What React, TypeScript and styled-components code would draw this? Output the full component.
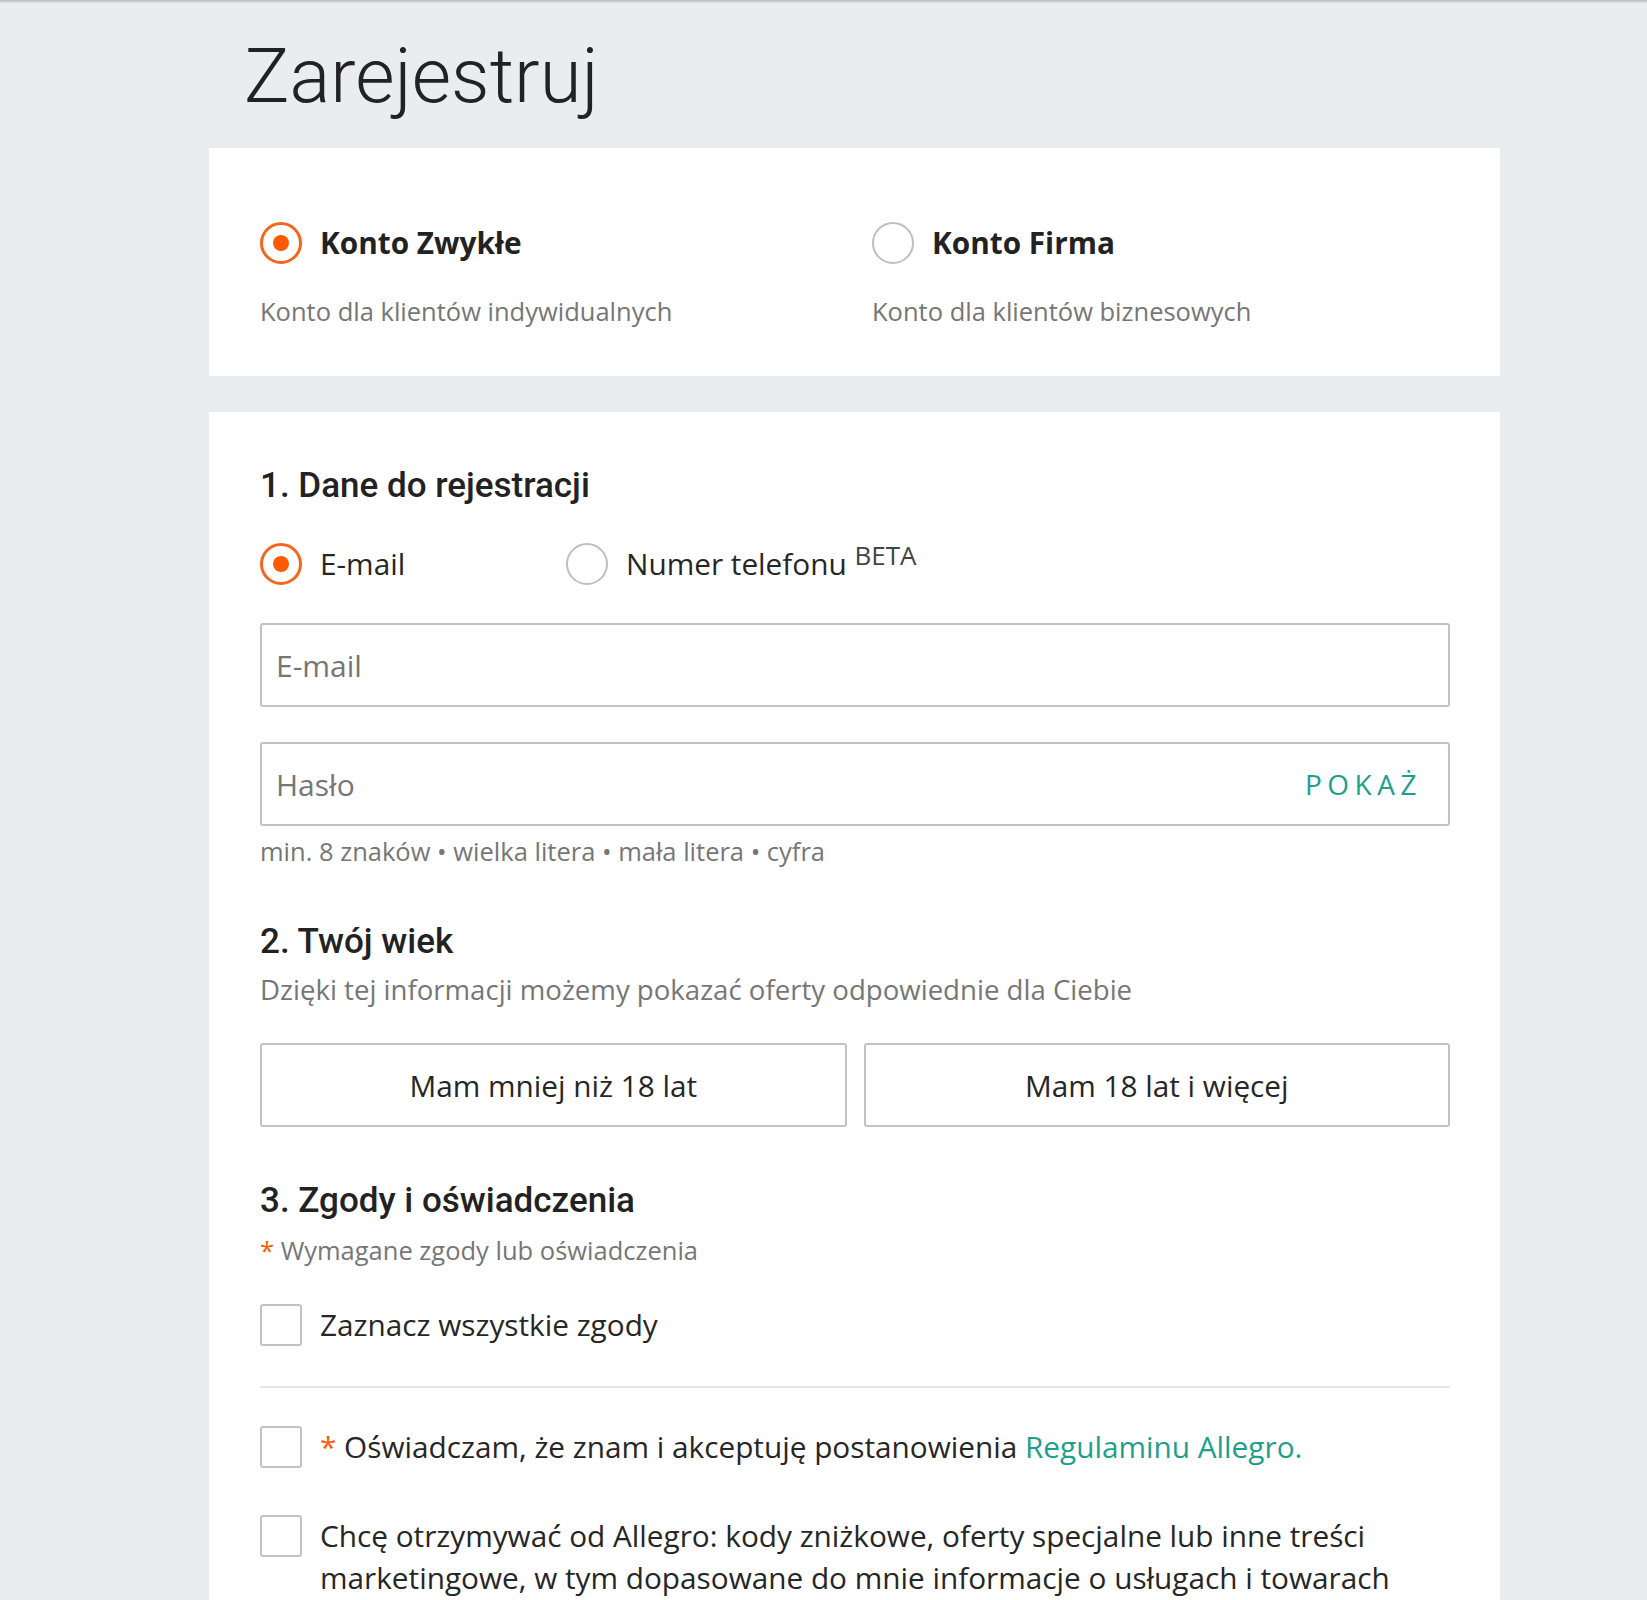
import styled, { createGlobalStyle } from "styled-components";

const GlobalStyle = createGlobalStyle`
  body {
    margin: 0;
    background: #eaedf0;
    font-family: "Open Sans", "Liberation Sans", sans-serif;
    color: #262626;
  }
  * {
    box-sizing: border-box;
  }
`;

const TopShade = styled.div`
  height: 3px;
  background: linear-gradient(#b7bbbf, #dfe2e5);
`;

const Page = styled.div`
  width: 1291px;
  margin-left: 209px;
`;

const Title = styled.h1`
  margin: 0;
  padding: 35px 0 34px 35px;
  font-family: Roboto, "Liberation Sans", sans-serif;
  font-weight: 300;
  font-size: 76px;
  line-height: 76px;
  color: #222;
`;

const Card = styled.section<{ $gapTop?: number }>`
  background: #fff;
  margin-top: ${(p) => p.$gapTop ?? 0}px;
  padding: 74px 50px 49px 51px;
`;

const FormCard = styled(Card)`
  padding: 54px 50px 80px 51px;
`;

const AccountGrid = styled.div`
  display: grid;
  grid-template-columns: 612px 1fr;
`;

const AccountOption = styled.div`
  display: flex;
  flex-direction: column;
`;

const OptionHead = styled.label`
  display: flex;
  align-items: center;
  gap: 18px;
  cursor: pointer;
`;

const Radio = styled.span<{ $checked?: boolean }>`
  position: relative;
  flex-shrink: 0;
  width: 42px;
  height: 42px;
  border-radius: 50%;
  border: ${(p) => (p.$checked ? "3px solid #f4661b" : "2px solid #bfbfbf")};
  background: #fff;

  &::after {
    content: "";
    display: ${(p) => (p.$checked ? "block" : "none")};
    position: absolute;
    left: 50%;
    top: 50%;
    width: 16px;
    height: 16px;
    margin: -8px 0 0 -8px;
    border-radius: 50%;
    background: #ff5a00;
  }
`;

const AccountName = styled.span`
  font-size: 29.75px;
  font-weight: 700;
  line-height: 42px;
  color: #222;
`;

const AccountNote = styled.p`
  margin: 31px 0 0;
  font-size: 25.5px;
  line-height: 32px;
  color: #767676;
`;

const SectionTitle = styled.h2<{ $gapTop?: number }>`
  margin: ${(p) => p.$gapTop ?? 0}px 0 0;
  font-family: Roboto, "Liberation Sans", sans-serif;
  font-weight: 500;
  font-size: 35px;
  line-height: 40px;
  color: #222;
`;

const ContactRow = styled.div`
  display: flex;
  margin-top: 37px;
`;

const ContactOption = styled(OptionHead)<{ $width?: number }>`
  width: ${(p) => (p.$width ? `${p.$width}px` : "auto")};
`;

const OptionLabel = styled.span`
  font-size: 29.75px;
  line-height: 42px;
  color: #262626;
`;

const Beta = styled.sup`
  font-size: 26px;
  line-height: 0;
  vertical-align: 10px;
  color: #444;
`;

const FieldBox = styled.div<{ $gapTop: number }>`
  display: flex;
  align-items: center;
  height: 84px;
  margin-top: ${(p) => p.$gapTop}px;
  border: 2px solid #c2c2c2;
  border-radius: 3px;
  background: #fff;
`;

const Input = styled.input`
  flex: 1;
  min-width: 0;
  height: 100%;
  padding: 0 14px;
  border: none;
  outline: none;
  background: transparent;
  font-family: "Open Sans", "Liberation Sans", sans-serif;
  font-size: 30px;
  color: #262626;

  &::placeholder {
    color: #767676;
  }
`;

const ShowButton = styled.button`
  padding: 0 26px 0 10px;
  border: none;
  background: none;
  font-family: "Open Sans", "Liberation Sans", sans-serif;
  font-size: 28px;
  letter-spacing: 5.5px;
  color: #1d9f8c;
  cursor: pointer;
`;

const Hint = styled.p<{ $gapTop?: number }>`
  margin: ${(p) => p.$gapTop ?? 0}px 0 0;
  font-size: 25.5px;
  line-height: 32px;
  color: #767676;
`;

const Description = styled.p`
  margin: 7px 0 0;
  font-size: 27.6px;
  line-height: 40px;
  color: #767676;
`;

const AgeRow = styled.div`
  display: grid;
  grid-template-columns: 1fr 1fr;
  gap: 17px;
  margin-top: 34px;
`;

const AgeButton = styled.button`
  height: 84px;
  border: 2px solid #c2c2c2;
  border-radius: 3px;
  background: #fff;
  font-family: "Open Sans", "Liberation Sans", sans-serif;
  font-size: 29.75px;
  color: #262626;
  cursor: pointer;
`;

const Star = styled.span`
  color: #ff5a00;
`;

const CheckRow = styled.label<{ $gapTop: number }>`
  display: flex;
  align-items: flex-start;
  gap: 18px;
  margin-top: ${(p) => p.$gapTop}px;
  cursor: pointer;
`;

const CheckBox = styled.span`
  flex-shrink: 0;
  width: 42px;
  height: 42px;
  border: 2px solid #c2c2c2;
  border-radius: 3px;
  background: #fff;
`;

const CheckText = styled.span`
  font-size: 29.75px;
  line-height: 42px;
  color: #262626;
`;

const Link = styled.a`
  color: #1d9f8c;
  text-decoration: none;
`;

const Divider = styled.hr`
  margin: 40px 0 0;
  border: none;
  border-top: 2px solid #e6e6e6;
`;

function App() {
  return (
    <>
      <GlobalStyle />
      <TopShade />
      <Page>
        <Title>Zarejestruj</Title>

        <Card>
          <AccountGrid>
            <AccountOption>
              <OptionHead>
                <Radio $checked />
                <AccountName>Konto Zwykłe</AccountName>
              </OptionHead>
              <AccountNote>Konto dla klientów indywidualnych</AccountNote>
            </AccountOption>
            <AccountOption>
              <OptionHead>
                <Radio />
                <AccountName>Konto Firma</AccountName>
              </OptionHead>
              <AccountNote>Konto dla klientów biznesowych</AccountNote>
            </AccountOption>
          </AccountGrid>
        </Card>

        <FormCard $gapTop={36}>
          <SectionTitle>1. Dane do rejestracji</SectionTitle>
          <ContactRow>
            <ContactOption $width={306}>
              <Radio $checked />
              <OptionLabel>E-mail</OptionLabel>
            </ContactOption>
            <ContactOption>
              <Radio />
              <OptionLabel>
                Numer telefonu <Beta>BETA</Beta>
              </OptionLabel>
            </ContactOption>
          </ContactRow>

          <FieldBox $gapTop={38}>
            <Input type="email" placeholder="E-mail" />
          </FieldBox>
          <FieldBox $gapTop={35}>
            <Input type="password" placeholder="Hasło" />
            <ShowButton type="button">POKAŻ</ShowButton>
          </FieldBox>
          <Hint $gapTop={9}>min. 8 znaków • wielka litera • mała litera • cyfra</Hint>

          <SectionTitle $gapTop={55}>2. Twój wiek</SectionTitle>
          <Description>Dzięki tej informacji możemy pokazać oferty odpowiednie dla Ciebie</Description>
          <AgeRow>
            <AgeButton type="button">Mam mniej niż 18 lat</AgeButton>
            <AgeButton type="button">Mam 18 lat i więcej</AgeButton>
          </AgeRow>

          <SectionTitle $gapTop={54}>3. Zgody i oświadczenia</SectionTitle>
          <Hint $gapTop={13}>
            <Star>*</Star> Wymagane zgody lub oświadczenia
          </Hint>

          <CheckRow $gapTop={38}>
            <CheckBox />
            <CheckText>Zaznacz wszystkie zgody</CheckText>
          </CheckRow>
          <Divider />
          <CheckRow $gapTop={38}>
            <CheckBox />
            <CheckText>
              <Star>*</Star> Oświadczam, że znam i akceptuję postanowienia{" "}
              <Link href="#">Regulaminu Allegro.</Link>
            </CheckText>
          </CheckRow>
          <CheckRow $gapTop={47}>
            <CheckBox />
            <CheckText>
              Chcę otrzymywać od Allegro: kody zniżkowe, oferty specjalne lub inne treści
              marketingowe, w tym dopasowane do mnie informacje o usługach i towarach
            </CheckText>
          </CheckRow>
        </FormCard>
      </Page>
    </>
  );
}

export default App;
